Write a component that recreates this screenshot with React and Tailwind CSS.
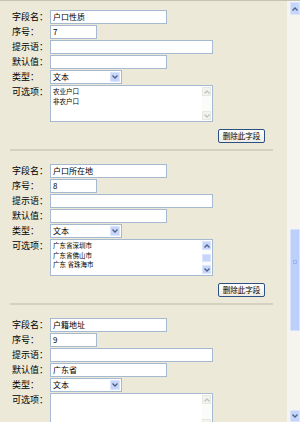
import React from "react";

const F = { fontFamily: '"Noto Sans CJK SC", "Noto Sans", sans-serif' };

function Chevron({ up, color = "#4d6185" }) {
  return (
    <svg width="6" height="4" viewBox="0 0 6 4">
      <path d={up ? "M0.5 3.5 L3 1 L5.5 3.5" : "M0.5 0.5 L3 3 L5.5 0.5"} stroke={color} strokeWidth="1.3" fill="none" />
    </svg>
  );
}

function Label({ children }) {
  return <div className="w-[38px] shrink-0 text-[9px] leading-[14px] text-black whitespace-nowrap">{children}</div>;
}

function Box({ w, value }) {
  return (
    <div className={`${w} h-[14px] border border-[#a5b9d0] bg-white text-[8px] leading-[12px] pl-[2px] text-black whitespace-nowrap overflow-hidden`}>
      {value}
    </div>
  );
}

function Select() {
  return (
    <div className="w-[72px] h-[14px] border border-[#a5b9d0] bg-white flex items-stretch">
      <div className="flex-1 text-[8px] leading-[12px] pl-[2px] text-black">文本</div>
      <div className="w-[10px] m-[1px] bg-[#c6d6fa] border border-[#dbe5fd] flex items-center justify-center">
        <Chevron />
      </div>
    </div>
  );
}

function TextArea({ lines, active, h }) {
  const btn = active ? "bg-[#c6d6fa] border-[#dbe5fd]" : "bg-[#f3f3ef] border-[#e8e8e2]";
  const arrow = active ? "#4d6185" : "#c4c4bc";
  return (
    <div className={`w-[163px] ${h} border border-[#a5b9d0] bg-white flex`}>
      <div className="flex-1 pl-[2px] pt-[1px] text-[6.5px] leading-[9.5px] text-black">
        {lines.map((l, i) => (
          <div key={i} className="whitespace-nowrap">{l}</div>
        ))}
      </div>
      <div className="w-[9px] bg-[#fbfbf9] flex flex-col justify-between mr-[1px] my-[1px]">
        <div className={`h-[9px] border ${btn} flex items-center justify-center`}>
          <Chevron up color={arrow} />
        </div>
        {active && (
          <div className="flex-1 flex flex-col">
            <div className="h-[4px]" />
            <div className="h-[8px] bg-[#c6d6fa] border border-[#dbe5fd]" />
          </div>
        )}
        <div className={`h-[9px] border ${btn} flex items-center justify-center`}>
          <Chevron color={arrow} />
        </div>
      </div>
    </div>
  );
}

function Section({ name, seq, def, lines, active, last }) {
  return (
    <div className="flex flex-col pl-[12px] pt-[9px]">
      <div className="flex flex-col gap-[1px]">
        <div className="flex items-center"><Label>字段名：</Label><Box w="w-[117px]" value={name} /></div>
        <div className="flex items-center"><Label>序号：</Label><Box w="w-[47px]" value={seq} /></div>
        <div className="flex items-center"><Label>提示语：</Label><Box w="w-[163px]" value="" /></div>
        <div className="flex items-center"><Label>默认值：</Label><Box w="w-[117px]" value={def} /></div>
        <div className="flex items-center"><Label>类型：</Label><Select /></div>
        <div className="flex items-start"><Label>可选项：</Label><TextArea lines={lines} active={active} h="h-[37px]" /></div>
      </div>
      {!last && (
        <>
          <div className="flex pl-[206px] mt-[7px]">
            <div className="w-[47px] h-[14px] rounded-[2px] border border-[#2c4f84] bg-gradient-to-b from-white to-[#ecebe4] text-[7.5px] leading-[12px] text-center text-black whitespace-nowrap">
              删除此字段
            </div>
          </div>
          <div className="mt-[6px] -ml-[2px] w-[263px] h-[2px] bg-[#d5d1c0]" />
        </>
      )}
    </div>
  );
}

export default function App() {
  return (
    <div style={F} className="w-[300px] h-[422px] bg-[#ece9d8] flex overflow-hidden border-t border-[#c7c3b4]">
      <div className="flex-1 flex flex-col">
        <Section name="户口性质" seq="7" def="" lines={["农业户口", "非农户口"]} />
        <div className="pt-[4px]">
          <Section name="户口所在地" seq="8" def="" lines={["广东省深圳市", "广东省佛山市", "广东 省珠海市"]} active />
        </div>
        <div className="pt-[4px]">
          <Section name="户籍地址" seq="9" def="广东省" lines={[]} last />
        </div>
      </div>
      <div className="w-[13px] bg-[#f5f4ef] flex flex-col pl-[3px] pt-[1px]">
        <div className="h-[13px] bg-[#c6d6fa] border border-[#dbe5fd] rounded-[1px] flex items-center justify-center">
          <Chevron up />
        </div>
        <div className="h-[214px]" />
        <div className="h-[102px] bg-[#bdd0fb] border border-[#d6e2fd] rounded-[1px] flex flex-col items-center">
          <div className="h-[30px]" />
          <div className="w-[4px] h-[4px] border border-[#9fb6ec]" />
        </div>
        <div className="flex-1" />
        <div className="h-[12px] bg-[#c6d6fa] border border-[#dbe5fd] rounded-[1px] flex items-center justify-center">
          <Chevron />
        </div>
      </div>
    </div>
  );
}
